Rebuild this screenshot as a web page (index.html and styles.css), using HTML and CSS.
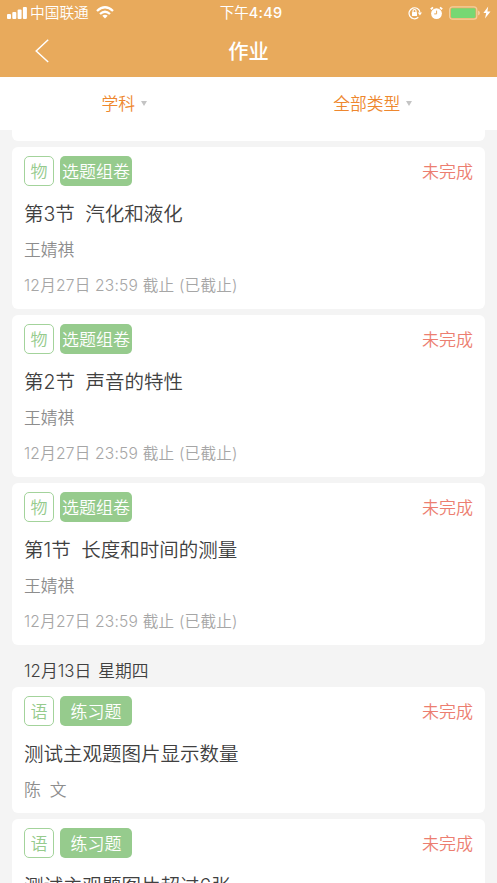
FILE: index.html
```html
<!DOCTYPE html>
<html lang="zh-CN">
<head>
<meta charset="utf-8">
<title>作业</title>
<link rel="stylesheet" href="styles.css">
</head>
<body>
<div class="screen">
  <header class="header">
    <div class="status-bar">
      <div class="status-left">
        <svg class="signal" width="20" height="13" viewBox="0 0 20 13" fill="#fff"><rect x="0" y="8" width="4" height="5" rx="1"/><rect x="5.3" y="6" width="4" height="7" rx="1"/><rect x="10.6" y="3.5" width="4" height="9.5" rx="1"/><rect x="15.9" y="1" width="4" height="12" rx="1"/></svg>
        <span class="carrier">中国联通</span>
        <svg class="wifi" width="18" height="13" viewBox="0 0 18 13" fill="none" stroke="#fff" stroke-width="2.3"><path d="M1 5Q9-2.5 17 5M4 8Q9 3.5 14 8"/><path d="M6.3 9.8Q9 7.6 11.7 9.8L9 12.6Z" fill="#fff" stroke="none"/></svg>
      </div>
      <span class="time">下午<b>4:49</b></span>
      <div class="status-right">
        <svg class="lock" width="14" height="14" viewBox="0 0 14 14" fill="none" stroke="#fff" stroke-width="1.2"><path d="M10.3 11.3A5.5 5.5 0 1 1 12 6.5"/><path d="M9.8 6.5h4.2l-2.1 2.9z" fill="#fff" stroke="none"/><rect x="4" y="6.1" width="5" height="3.9" rx=".5" fill="#fff" stroke="none"/><path d="M5 6.3V5a1.5 1.5 0 0 1 3 0v1.3"/></svg>
        <svg class="alarm" width="13" height="14" viewBox="0 0 13 14"><circle cx="6.5" cy="7.6" r="5.4" fill="#fff"/><path d="M6.6 4.6v3.3H4.2" fill="none" stroke="#e8aa5c"/><path d="M.8 3.3 3 1.4M12.2 3.3 10 1.4" stroke="#fff" stroke-width="1.8"/></svg>
        <svg class="battery" width="32" height="14" viewBox="0 0 32 14"><rect x=".6" y=".8" width="27.2" height="12.4" rx="3" fill="none" stroke="#f3cf9f" stroke-width="1.2"/><rect x="2" y="2.2" width="24.5" height="9.7" rx="1.4" fill="#77d773"/><path d="M29 4.6q2 .6 2 2.4t-2 2.4z" fill="#f3cf9f"/></svg>
        <svg class="bolt" width="8" height="13" viewBox="0 0 8 13" fill="#fff"><path d="M5.2.5.4 7h2.8L2 12.5 7.5 5.6H4.4z"/></svg>
      </div>
    </div>
    <div class="nav">
      <svg class="back" width="15" height="24" viewBox="0 0 15 24" fill="none" stroke="#fff" stroke-width="1.5"><path d="M13.2.8 1.2 12l12 11"/></svg>
      <h1>作业</h1>
    </div>
  </header>
  <div class="filters">
    <div class="filter"><span>学科</span><i class="caret"></i></div>
    <div class="filter"><span>全部类型</span><i class="caret"></i></div>
  </div>
  <main class="list">
    <article class="card card-tail"></article>
    <article class="card card-full">
      <div class="row"><span class="subject">物</span><span class="tag">选题组卷</span><span class="state">未完成</span></div>
      <h2 class="title"><span>第3节</span><span>汽化和液化</span></h2>
      <p class="teacher">王婧祺</p>
      <p class="deadline">12月27日 23:59 截止 (已截止)</p>
    </article>
    <article class="card card-full">
      <div class="row"><span class="subject">物</span><span class="tag">选题组卷</span><span class="state">未完成</span></div>
      <h2 class="title"><span>第2节</span><span>声音的特性</span></h2>
      <p class="teacher">王婧祺</p>
      <p class="deadline">12月27日 23:59 截止 (已截止)</p>
    </article>
    <article class="card card-full">
      <div class="row"><span class="subject">物</span><span class="tag">选题组卷</span><span class="state">未完成</span></div>
      <h2 class="title"><span>第1节</span><span>长度和时间的测量</span></h2>
      <p class="teacher">王婧祺</p>
      <p class="deadline">12月27日 23:59 截止 (已截止)</p>
    </article>
    <h3 class="date"><span>12月13日</span><span>星期四</span></h3>
    <article class="card card-short">
      <div class="row"><span class="subject">语</span><span class="tag">练习题</span><span class="state">未完成</span></div>
      <h2 class="title">测试主观题图片显示数量</h2>
      <p class="teacher spaced"><span>陈</span><span>文</span></p>
    </article>
    <article class="card card-short">
      <div class="row"><span class="subject">语</span><span class="tag">练习题</span><span class="state">未完成</span></div>
      <h2 class="title">测试主观题图片超过6张</h2>
    </article>
  </main>
</div>
</body>
</html>
```
FILE: styles.css
```css
* { box-sizing: border-box; }
body, h1, h2, h3, p { margin: 0; font-weight: 350; }
body { font-family: Inter, "Noto Sans CJK SC", sans-serif; background: #f4f4f4; }
svg { display: block; flex: none; }
.screen { height: 883px; overflow: hidden; background: #f4f4f4; }

.header { height: 77px; background: #e8aa5c; color: #fff; }
.status-bar { height: 25px; display: grid; grid-template-columns: 1fr auto 1fr; align-items: center; padding: 0 6px 0 7px; }
.status-left, .status-right { display: flex; align-items: center; }
.status-right { justify-content: flex-end; }
.carrier { font-size: 14.7px; line-height: 20px; margin: 1px 7px 0 3px; }
.time { font-size: 14.5px; line-height: 20px; font-weight: 400; margin: 1px 0 0 4px; }
.time b { font-weight: 500; letter-spacing: .25px; }
.lock { margin-right: 1px; }
.alarm { margin: 0 6px 0 7px; }
.bolt { margin-left: 2px; }
.nav { height: 52px; display: grid; grid-template-columns: 1fr auto 1fr; align-items: center; }
.back { margin-left: 35px; }
.nav h1 { font-size: 20.3px; line-height: 28px; font-weight: 500; margin-top: 1px; }

.filters { height: 53px; display: grid; grid-template-columns: 1fr 1fr; background: #fff; }
.filter { display: flex; align-items: center; justify-content: center; gap: 6px; font-size: 16.8px; line-height: 24px; color: #ee872e; }
.caret { border: 3.5px solid transparent; border-top: 5px solid #c4c4c4; border-bottom: 0; }

.list { display: flex; flex-direction: column; padding: 0 12px; }
.card { flex: none; background: #fff; border-radius: 6px; margin-bottom: 6px; padding: 9px 12px 0; }
.card-tail { height: 11px; border-radius: 0 0 6px 6px; padding: 0; }
.card-full { height: 162px; }
.card-short { height: 126px; }
.row { display: flex; align-items: center; height: 30px; font-size: 17px; line-height: 30px; }
.subject { width: 30px; height: 30px; border: 1px solid #a3d39b; border-radius: 5px; text-align: center; color: #96cb8d; }
.tag { width: 72px; height: 30px; line-height: 32px; margin-left: 6px; border-radius: 5px; background: #96cb8d; color: #fff; text-align: center; }
.state { margin: 2px 0 0 auto; color: #ec7e70; }
.title { display: flex; gap: 10.5px; margin-top: 14px; font-size: 19.5px; line-height: 28px; color: #404040; }
.teacher { margin-top: 10px; font-size: 16.8px; line-height: 24px; color: #8d8d8d; }
.spaced { display: flex; gap: 9px; }
.deadline { margin-top: 12px; font-size: 15.6px; line-height: 24px; letter-spacing: .21px; color: #a6a6a6; }
.date { display: flex; gap: 7px; height: 36px; padding: 7px 12px 0; font-size: 16.8px; line-height: 26px; color: #404040; }
```
